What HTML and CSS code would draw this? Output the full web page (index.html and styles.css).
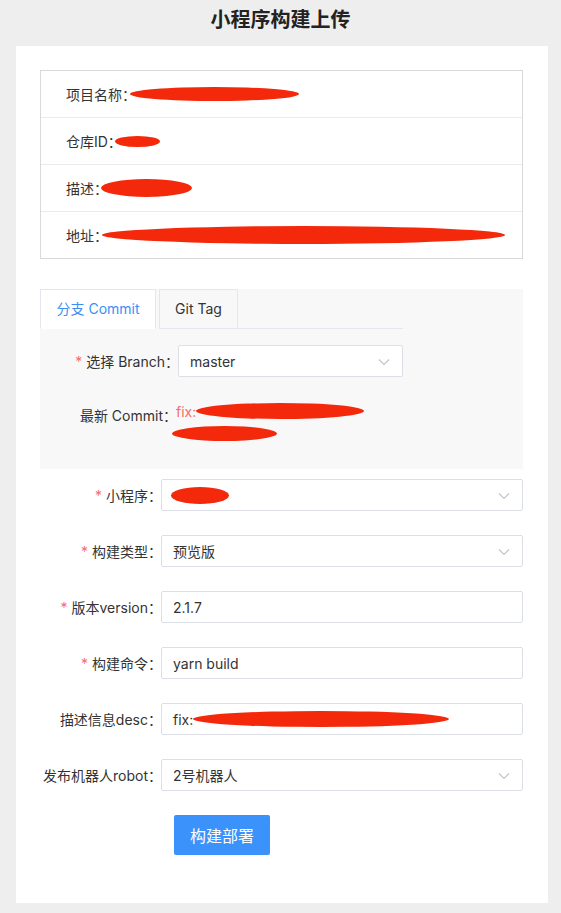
FILE: index.html
```html
<!DOCTYPE html>
<html lang="zh">
<head>
<meta charset="utf-8">
<title>小程序构建上传</title>
<link rel="stylesheet" href="styles.css">
</head>
<body>
<header class="page-title">小程序构建上传</header>
<main class="card">
  <section class="info">
    <div class="info-row">项目名称：<span class="redact r-name"></span></div>
    <div class="info-row">仓库ID：<span class="redact r-id"></span></div>
    <div class="info-row">描述：<span class="redact r-desc"></span></div>
    <div class="info-row">地址：<span class="redact r-addr"></span></div>
  </section>

  <section class="tabs">
    <div class="tab-bar">
      <div class="tab active">分支 Commit</div>
      <div class="tab">Git Tag</div>
      <div class="tab-fill"></div>
    </div>
    <div class="tab-body">
      <div class="t-row">
        <label class="t-label"><span class="req">*</span> 选择 Branch：</label>
        <div class="select t-select">master<svg class="arrow" viewBox="0 0 12 8"><path d="M1 1.5 L6 6.5 L11 1.5" fill="none" stroke="#c0c4cc" stroke-width="1.1"/></svg></div>
      </div>
      <div class="t-row commit-row">
        <label class="t-label">最新 Commit：</label>
        <div class="commit-val">
          <div class="commit-line">fix:<span class="redact r-c1"></span></div>
          <div class="commit-line"><span class="redact r-c2"></span></div>
        </div>
      </div>
    </div>
  </section>

  <section class="form">
    <div class="f-row">
      <label class="f-label"><span class="req">*</span> 小程序：</label>
      <div class="select"><span class="redact r-app"></span><svg class="arrow" viewBox="0 0 12 8"><path d="M1 1.5 L6 6.5 L11 1.5" fill="none" stroke="#c0c4cc" stroke-width="1.1"/></svg></div>
    </div>
    <div class="f-row">
      <label class="f-label"><span class="req">*</span> 构建类型：</label>
      <div class="select">预览版<svg class="arrow" viewBox="0 0 12 8"><path d="M1 1.5 L6 6.5 L11 1.5" fill="none" stroke="#c0c4cc" stroke-width="1.1"/></svg></div>
    </div>
    <div class="f-row">
      <label class="f-label"><span class="req">*</span> 版本version：</label>
      <div class="select">2.1.7</div>
    </div>
    <div class="f-row">
      <label class="f-label"><span class="req">*</span> 构建命令：</label>
      <div class="select">yarn build</div>
    </div>
    <div class="f-row">
      <label class="f-label">描述信息desc：</label>
      <div class="select">fix:<span class="redact r-fdesc"></span></div>
    </div>
    <div class="f-row">
      <label class="f-label">发布机器人robot：</label>
      <div class="select">2号机器人<svg class="arrow" viewBox="0 0 12 8"><path d="M1 1.5 L6 6.5 L11 1.5" fill="none" stroke="#c0c4cc" stroke-width="1.1"/></svg></div>
    </div>
    <div class="btn-row">
      <button class="btn">构建部署</button>
    </div>
  </section>
</main>
</body>
</html>
```

FILE: styles.css
```css
* { box-sizing: border-box; }
html, body { margin: 0; padding: 0; }
body {
  background: #eeeeee;
  font-family: Inter, "Noto Sans CJK SC", sans-serif;
  font-size: 14px;
  color: #333;
  font-feature-settings: "halt";
}
.page-title {
  height: 46px;
  padding-top: 6px;
  line-height: 28px;
  text-align: center;
  font-size: 20px;
  font-weight: 600;
  color: #222;
}
.card {
  background: #fff;
  margin: 0 13px 10px 16px;
  padding: 24px 25px 48px 24px;
  height: 857px;
}
.info {
  border: 1px solid #d9d9d9;
}
.info-row {
  height: 47px;
  display: flex;
  align-items: center;
  padding-left: 25px;
  border-bottom: 1px solid #ebebeb;
  color: #333;
}
.info-row:last-child { border-bottom: none; height: 46px; }

.redact {
  display: inline-block;
  background: #f4290c;
  border-radius: 50%;
  vertical-align: middle;
}
.r-name { width: 169px; height: 14px; margin-left: 1px; }
.r-id { width: 45px; height: 11px; margin-left: 0; }
.r-desc { width: 91px; height: 18px; margin-left: 0; }
.r-addr { width: 403px; height: 18px; margin-left: 1px; }
.r-c1 { width: 168px; height: 16px; }
.r-c2 { width: 105px; height: 15px; margin-left: -4px; }
.r-app { width: 58px; height: 17px; margin-left: -2px; }
.r-fdesc { width: 256px; height: 16px; }

.tabs {
  margin-top: 30px;
  background: #f8f8f8;
  height: 180px;
}
.tab-bar {
  display: flex;
  height: 40px;
  width: 363px;
}
.tab {
  height: 40px;
  line-height: 38px;
  border: 1px solid #e4e7ed;
  color: #333;
  margin-right: 3px;
  text-align: center;
}
.tab.active {
  background: #fff;
  color: #3c8ef5;
  border-bottom-color: transparent;
  width: 116px;
}
.tab:nth-child(2) { width: 79px; }
.tab-fill {
  flex: 1;
  border-bottom: 1px solid #e4e7ed;
  margin-left: -3px;
}
.tab-body {
  padding-top: 16px;
}
.t-row {
  display: flex;
  align-items: center;
}
.t-label {
  width: 138px;
  text-align: right;
  padding-right: 6px;
  color: #333;
}
.req { color: #f56c6c; }
.select {
  position: relative;
  flex: 1;
  height: 32px;
  border: 1px solid #dcdfe6;
  border-radius: 2px;
  background: #fff;
  padding-left: 11px;
  display: flex;
  align-items: center;
  color: #333;
}
.t-select { flex: 0 0 225px; }
.arrow {
  position: absolute;
  right: 12px;
  top: 12px;
  width: 12px;
  height: 8px;
}
.commit-row {
  margin-top: 23px;
  align-items: flex-start;
}
.commit-row .t-label { line-height: 32px; padding-right: 6px; width: 136px; }
.commit-line {
  height: 22px;
  display: flex;
  align-items: center;
  color: #f56c6c;
}

.form { padding-top: 10px; }
.f-row {
  display: flex;
  align-items: center;
  margin-bottom: 24px;
}
.f-label {
  width: 121px;
  text-align: right;
  padding-right: 6px;
  color: #333;
  white-space: nowrap;
}
.btn-row { padding-left: 134px; }
.btn {
  width: 96px;
  height: 40px;
  border: none;
  border-radius: 2px;
  background: #3a92fa;
  color: #fff;
  font-family: inherit;
  font-size: 16px;
}
```
